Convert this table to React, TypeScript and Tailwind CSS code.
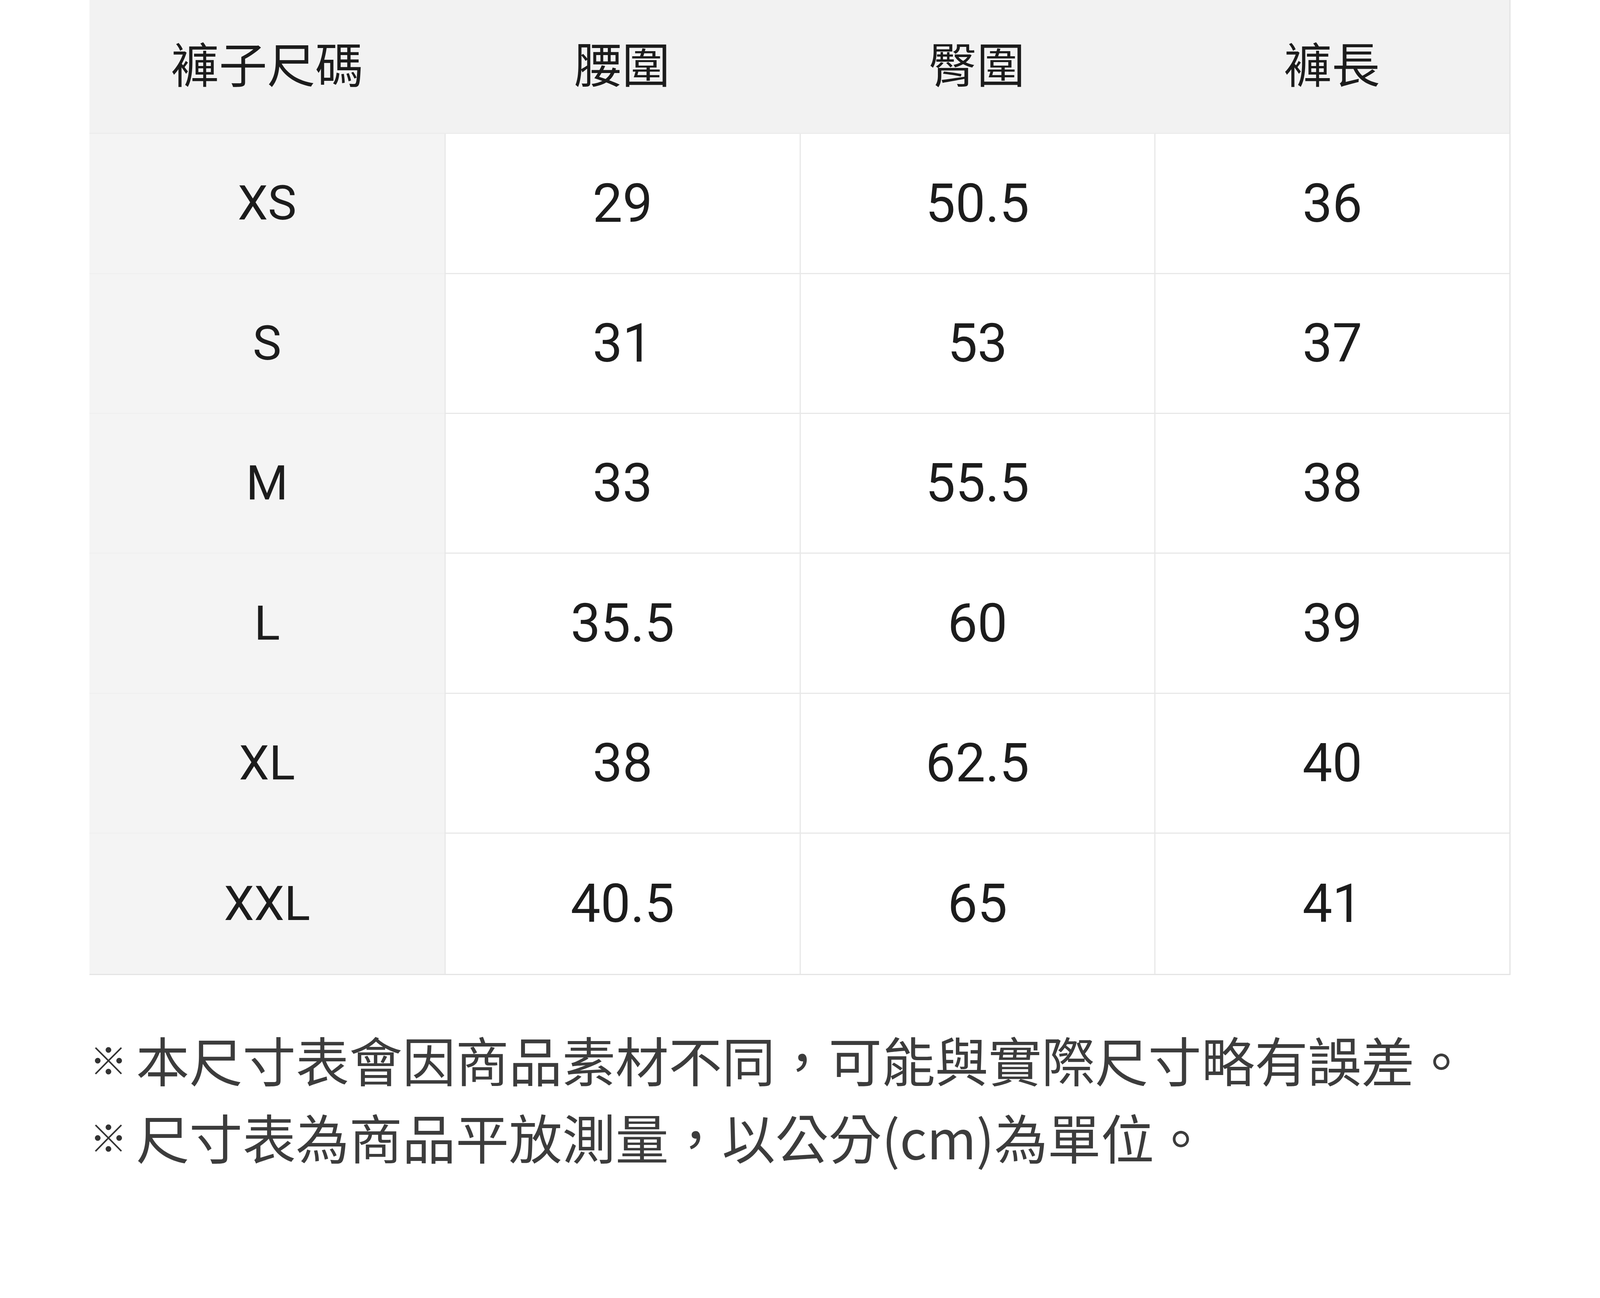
const headers = ['褲子尺碼', '腰圍', '臀圍', '褲長']

const rows = [
  ['XS', '29', '50.5', '36'],
  ['S', '31', '53', '37'],
  ['M', '33', '55.5', '38'],
  ['L', '35.5', '60', '39'],
  ['XL', '38', '62.5', '40'],
  ['XXL', '40.5', '65', '41'],
]

const notes = [
  '本尺寸表會因商品素材不同，可能與實際尺寸略有誤差。',
  '尺寸表為商品平放測量，以公分(cm)為單位。',
]

// sizes are in vw so the sheet keeps its proportions at any window width
export default function App() {
  return (
    <div className="w-full bg-white px-[5.6vw] pb-[3vw] font-['Roboto','Noto_Sans_CJK_TC',sans-serif]">
      <div className="grid grid-cols-4 border-r-[3px] border-b-[3px] border-[#e4e4e4] text-[3.01vw] text-[#1c1c1c]">
        {headers.map((h) => (
          <div
            key={h}
            className="flex h-[8.38vw] items-center justify-center border-b-[3px] border-[#ececec] bg-[#f2f2f2]"
          >
            {h}
          </div>
        ))}

        {rows.map((row, i) =>
          row.map((cell, j) => (
            <div
              key={`${i}-${j}`}
              className={
                j === 0
                  ? `flex h-[8.75vw] items-center justify-center bg-[#f4f4f4] ${i < rows.length - 1 ? 'border-b-[3px] border-[#f0f0f0]' : ''}`
                  : `flex h-[8.75vw] items-center justify-center border-l-[3px] border-[#e8e8e8] bg-white text-[3.33vw] ${i < rows.length - 1 ? 'border-b-[3px]' : ''}`
              }
            >
              {cell}
            </div>
          )),
        )}
      </div>

      <div className="mt-[2.85vw] text-[3.33vw] leading-[4.815vw] text-[#3c3c3c] font-['Noto_Sans_CJK_TC',sans-serif]">
        {notes.map((n) => (
          <div key={n} className="flex items-center">
            <span className="w-[2.9vw] shrink-0 text-[2.35vw] leading-[4.815vw] text-[#333333]">※</span>
            <span className="whitespace-nowrap">{n}</span>
          </div>
        ))}
      </div>
    </div>
  )
}
